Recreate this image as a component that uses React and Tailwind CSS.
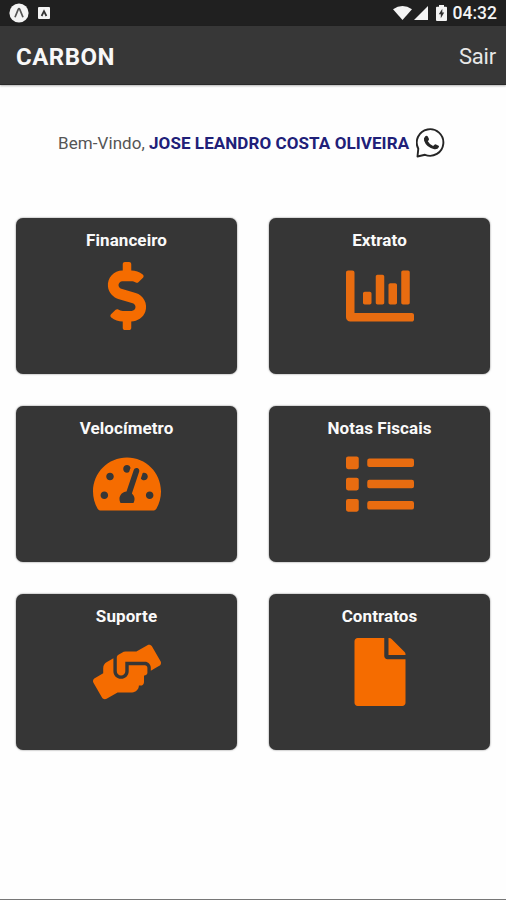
import React from "react";
import {
  FaDollarSign,
  FaChartBar,
  FaTachometerAlt,
  FaList,
  FaHandsHelping,
  FaFile,
} from "react-icons/fa";

const cards = [
  { title: "Financeiro", Icon: FaDollarSign, color: "text-[#f56c00]" },
  { title: "Extrato", Icon: FaChartBar, color: "text-[#e86c10]" },
  { title: "Velocímetro", Icon: FaTachometerAlt, color: "text-[#f56c00]" },
  { title: "Notas Fiscais", Icon: FaList, color: "text-[#e86c10]" },
  { title: "Suporte", Icon: FaHandsHelping, color: "text-[#f56c00]" },
  { title: "Contratos", Icon: FaFile, color: "text-[#f56c00]" },
];

function StatusBar() {
  return (
    <div className="flex h-[26px] items-center bg-[#202020] pr-[9px] pl-[9px] text-[#f4f4f4]">
      <svg className="size-5" viewBox="0 0 20 20">
        <circle cx="10" cy="10" r="9.6" fill="#f4f4f4" />
        <path d="M6 14.2 9.2 6.4q.8-1.4 1.6 0L14 14.2" fill="none" stroke="#555" strokeWidth="1.7" />
      </svg>
      <svg className="ml-[9px] size-3" viewBox="0 0 12 12">
        <rect width="12" height="12" rx="1" fill="#f4f4f4" />
        <path d="M3.6 9 6 4.2 8.4 9" fill="none" stroke="#333" strokeWidth="1.8" />
      </svg>
      <svg className="ml-auto h-[14px] w-[19px]" viewBox="0 0 19 14">
        <path d="M0 3.2Q9.5-3 19 3.2L9.5 14Z" fill="currentColor" />
      </svg>
      <svg className="ml-[2px] size-[14px]" viewBox="0 0 14 14">
        <path d="M14 0V14H0Z" fill="currentColor" />
      </svg>
      <svg className="ml-2 h-4 w-[11px]" viewBox="0 0 11 16">
        <path d="M3 0h5v1.7h2q1 0 1 1V15q0 1-1 1H1q-1 0-1-1V2.7q0-1 1-1h2Z" fill="currentColor" />
        <path d="M6.3 3.700 2.800 9.300h2v4l3.400-5.700h-1.900Z" fill="#303030" />
      </svg>
      <span className="ml-[6px] pt-[2px] text-[17.5px] leading-none font-medium">04:32</span>
    </div>
  );
}

function WhatsApp() {
  return (
    <svg className="ml-[7px] size-[30px] text-[#252525]" viewBox="0 0 30 30">
      <path
        d="M1.5 28.500 2.300 20.700A13.300 13.300 0 1 1 9 26.800Z"
        fill="none"
        stroke="currentColor"
        strokeWidth="1.9"
        strokeLinejoin="round"
      />
      <path
        d="M9.3 8.200q1.500-1 2.500.2l1.200 2.700q.2.800-1.200 2.200 1.800 3.300 5.300 4.700l1.700-1.600q.5-.4 1.200 0l2.600 1.300q.6.400.3 1.300-1.200 2.700-4.600 2.200Q10.500 19.700 8.100 12.800q-.8-2.900 1.200-4.600Z"
        fill="currentColor"
      />
    </svg>
  );
}

export default function App() {
  return (
    <div className="flex h-[900px] w-[506px] flex-col overflow-hidden border-b border-[#777] bg-[#fefefe] font-[Roboto,sans-serif]">
      <StatusBar />
      <header className="flex h-[59px] items-center justify-between border-b border-[#292929] bg-[#373737] pr-[10px] pl-4 shadow-[0_1px_2px_rgba(0,0,0,0.3)]">
        <h1 className="pt-[3px] text-[24px] leading-none font-bold tracking-[0.5px] text-[#f8f8f8]">CARBON</h1>
        <button className="pt-[3px] text-[22px] leading-none tracking-[-0.2px] text-[#e8e8e8]">Sair</button>
      </header>
      <div className="mt-[43px] flex h-[30px] items-center pl-[58px] text-[17px] whitespace-nowrap">
        <span className="pt-[2px] tracking-[0.08px] text-[#555]">Bem-Vindo,</span>
        <span className="ml-1 pt-[2px] font-bold tracking-[0.08px] text-[#202078]">JOSE LEANDRO COSTA OLIVEIRA</span>
        <WhatsApp />
      </div>
      <main className="mt-[60px] grid grid-cols-2 gap-x-8 gap-y-8 px-4">
        {cards.map(({ title, Icon, color }) => (
          <section
            key={title}
            className="flex h-[156px] flex-col items-center rounded-[7px] bg-[#363636] pt-3 shadow-[0_0_2px_rgba(0,0,0,0.55)]"
          >
            <h2 className="text-[17px] leading-5 font-bold tracking-[0.08px] text-[#fafafa]">{title}</h2>
            <Icon className={`mt-3 size-[68px] ${color}`} />
          </section>
        ))}
      </main>
    </div>
  );
}
